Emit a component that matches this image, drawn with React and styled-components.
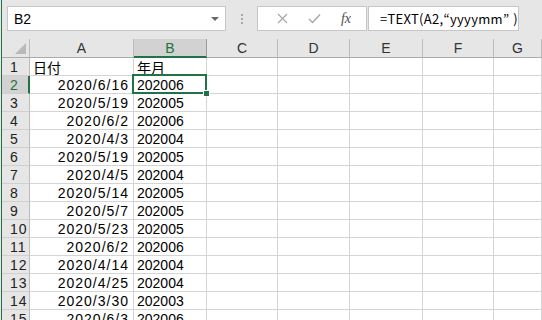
import React from "react";
import styled, { createGlobalStyle } from "styled-components";

const GREEN = "#217346";

const Global = createGlobalStyle`
  html, body { margin: 0; padding: 0; background: #fff; overflow: hidden; }
  body { font-family: "Liberation Sans", "Noto Sans CJK JP", sans-serif; }
  * { box-sizing: border-box; }
`;

const Window = styled.div`
  width: 542px;
  height: 320px;
  overflow: hidden;
  border-left: 1px solid #e6e6e6;
  position: relative;
  &::before {
    content: "";
    position: absolute;
    left: 0;
    top: 0;
    bottom: 0;
    width: 1px;
    background: ${GREEN};
    z-index: 5;
  }
  padding-left: 1px;
`;

const Toolbar = styled.div`
  height: 39px;
  background: #e6e6e6;
  display: flex;
  align-items: flex-start;
  padding: 6px 0 0 5px;
`;

const NameBox = styled.div`
  width: 219px;
  height: 25px;
  background: #fff;
  border: 1px solid #c6c6c6;
  display: flex;
  align-items: center;
  justify-content: space-between;
  padding: 0 6px 0 6px;
  font-size: 14px;
  color: #000;
`;

const Caret = styled.span`
  width: 0;
  height: 0;
  border-left: 4px solid transparent;
  border-right: 4px solid transparent;
  border-top: 4px solid #6a6a6a;
`;

const Grip = styled.div`
  width: 31px;
  height: 25px;
  display: flex;
  flex-direction: column;
  align-items: center;
  justify-content: center;
  gap: 2px;
  & > span {
    width: 2px;
    height: 2px;
    background: #a8a8a8;
  }
`;

const ButtonBox = styled.div`
  width: 110px;
  height: 25px;
  background: #fff;
  border: 1px solid #c6c6c6;
  display: flex;
  align-items: center;
  justify-content: space-around;
  padding: 0 4px 0 8px;
`;

const IconBtn = styled.span`
  width: 30px;
  display: flex;
  justify-content: center;
  align-items: center;
`;

const Fx = styled.span`
  font-family: "Liberation Serif", serif;
  font-style: italic;
  font-size: 14px;
  color: #505050;
`;

const FormulaBox = styled.div`
  margin-left: 1px;
  width: 151px;
  height: 25px;
  background: #fff;
  border: 1px solid #c6c6c6;
  display: flex;
  align-items: center;
  padding-left: 11px;
  font-family: "Noto Sans CJK JP", sans-serif;
  font-size: 13px;
  letter-spacing: 0.3px;
  color: #000;
  white-space: nowrap;
  overflow: hidden;
`;

const Quote = styled.span`
  display: inline-block;
  width: ${(p) => (p.$wide ? "11px" : "auto")};
`;

const Grid = styled.div`
  display: grid;
  grid-template-columns: 28px 104px 73px 71px 72px 73px 71px 1fr;
  grid-auto-rows: 18px;
  grid-template-rows: 19px;
`;

const Corner = styled.div`
  background: #e6e6e6;
  border-right: 1px solid #bcbcbc;
  border-bottom: 1px solid #ababab;
  position: relative;
  &::after {
    content: "";
    position: absolute;
    right: 3px;
    bottom: 3px;
    width: 0;
    height: 0;
    border-left: 11px solid transparent;
    border-bottom: 11px solid #b9b9b9;
  }
`;

const ColHead = styled.div`
  background: ${(p) => (p.$sel ? "#d2d2d2" : "#e6e6e6")};
  color: ${(p) => (p.$sel ? GREEN : "#333")};
  border-right: 1px solid ${(p) => (p.$sel ? "#9b9b9b" : "#bcbcbc")};
  border-bottom: ${(p) => (p.$sel ? `2px solid ${GREEN}` : "1px solid #ababab")};
  font-size: 14px;
  display: flex;
  align-items: center;
  justify-content: center;
  padding-top: ${(p) => (p.$sel ? "1px" : "0")};
`;

const RowHead = styled.div`
  background: ${(p) => (p.$sel ? "#d2d2d2" : "#e6e6e6")};
  color: ${(p) => (p.$sel ? GREEN : "#222")};
  border-right: ${(p) => (p.$sel ? `2px solid ${GREEN}` : "1px solid #bcbcbc")};
  border-bottom: 1px solid #d0d0d0;
  font-size: 14px;
  letter-spacing: 1px;
  display: flex;
  align-items: center;
  padding: 1px 0 0 8px;
`;

const Cell = styled.div`
  border-right: 1px solid #d4d4d4;
  border-bottom: 1px solid #d4d4d4;
  font-size: 14px;
  color: #000;
  display: flex;
  align-items: center;
  padding: 1px 4px 0 3px;
  justify-content: ${(p) => (p.$right ? "flex-end" : "flex-start")};
  letter-spacing: ${(p) => (p.$wide ? "1px" : "0")};
  white-space: nowrap;
  position: relative;
`;

const Selection = styled.div`
  position: absolute;
  left: -2px;
  top: -2px;
  right: -1px;
  bottom: -1px;
  border: 2px solid ${GREEN};
  pointer-events: none;
  z-index: 2;
`;

const Handle = styled.div`
  position: absolute;
  right: -5px;
  bottom: -5px;
  width: 7px;
  height: 7px;
  background: ${GREEN};
  border: 1px solid #fff;
`;

const rows = [
  ["日付", "年月", true],
  ["2020/6/16", "202006"],
  ["2020/5/19", "202005"],
  ["2020/6/2", "202006"],
  ["2020/4/3", "202004"],
  ["2020/5/19", "202005"],
  ["2020/4/5", "202004"],
  ["2020/5/14", "202005"],
  ["2020/5/7", "202005"],
  ["2020/5/23", "202005"],
  ["2020/6/2", "202006"],
  ["2020/4/14", "202004"],
  ["2020/4/25", "202004"],
  ["2020/3/30", "202003"],
  ["2020/6/3", "202006"],
];

const cols = ["A", "B", "C", "D", "E", "F", "G"];

export default function App() {
  return (
    <>
      <Global />
      <Window>
        <Toolbar>
          <NameBox>
            <span>B2</span>
            <Caret />
          </NameBox>
          <Grip>
            <span />
            <span />
            <span />
          </Grip>
          <ButtonBox>
            <IconBtn>
              <svg width="11" height="11" viewBox="0 0 11 11">
                <path d="M1 1L10 10M10 1L1 10" stroke="#a6a6a6" strokeWidth="1.2" fill="none" />
              </svg>
            </IconBtn>
            <IconBtn>
              <svg width="13" height="11" viewBox="0 0 13 11">
                <path d="M1 6L4.5 9.5L12 1.5" stroke="#a6a6a6" strokeWidth="1.4" fill="none" />
              </svg>
            </IconBtn>
            <IconBtn>
              <Fx>fx</Fx>
            </IconBtn>
          </ButtonBox>
          <FormulaBox>
            =TEXT(A2,<Quote>“</Quote>yyyymm<Quote $wide>”</Quote>)
          </FormulaBox>
        </Toolbar>
        <Grid>
          <Corner />
          {cols.map((c) => (
            <ColHead key={c} $sel={c === "B"}>
              {c}
            </ColHead>
          ))}
          {rows.map((r, i) => {
            const n = i + 1;
            const header = r[2];
            return (
              <React.Fragment key={n}>
                <RowHead $sel={n === 2}>{n}</RowHead>
                <Cell $right={!header} $wide={!header}>
                  {r[0]}
                </Cell>
                <Cell>
                  {r[1]}
                  {n === 2 && (
                    <Selection>
                      <Handle />
                    </Selection>
                  )}
                </Cell>
                <Cell />
                <Cell />
                <Cell />
                <Cell />
                <Cell />
              </React.Fragment>
            );
          })}
        </Grid>
      </Window>
    </>
  );
}
